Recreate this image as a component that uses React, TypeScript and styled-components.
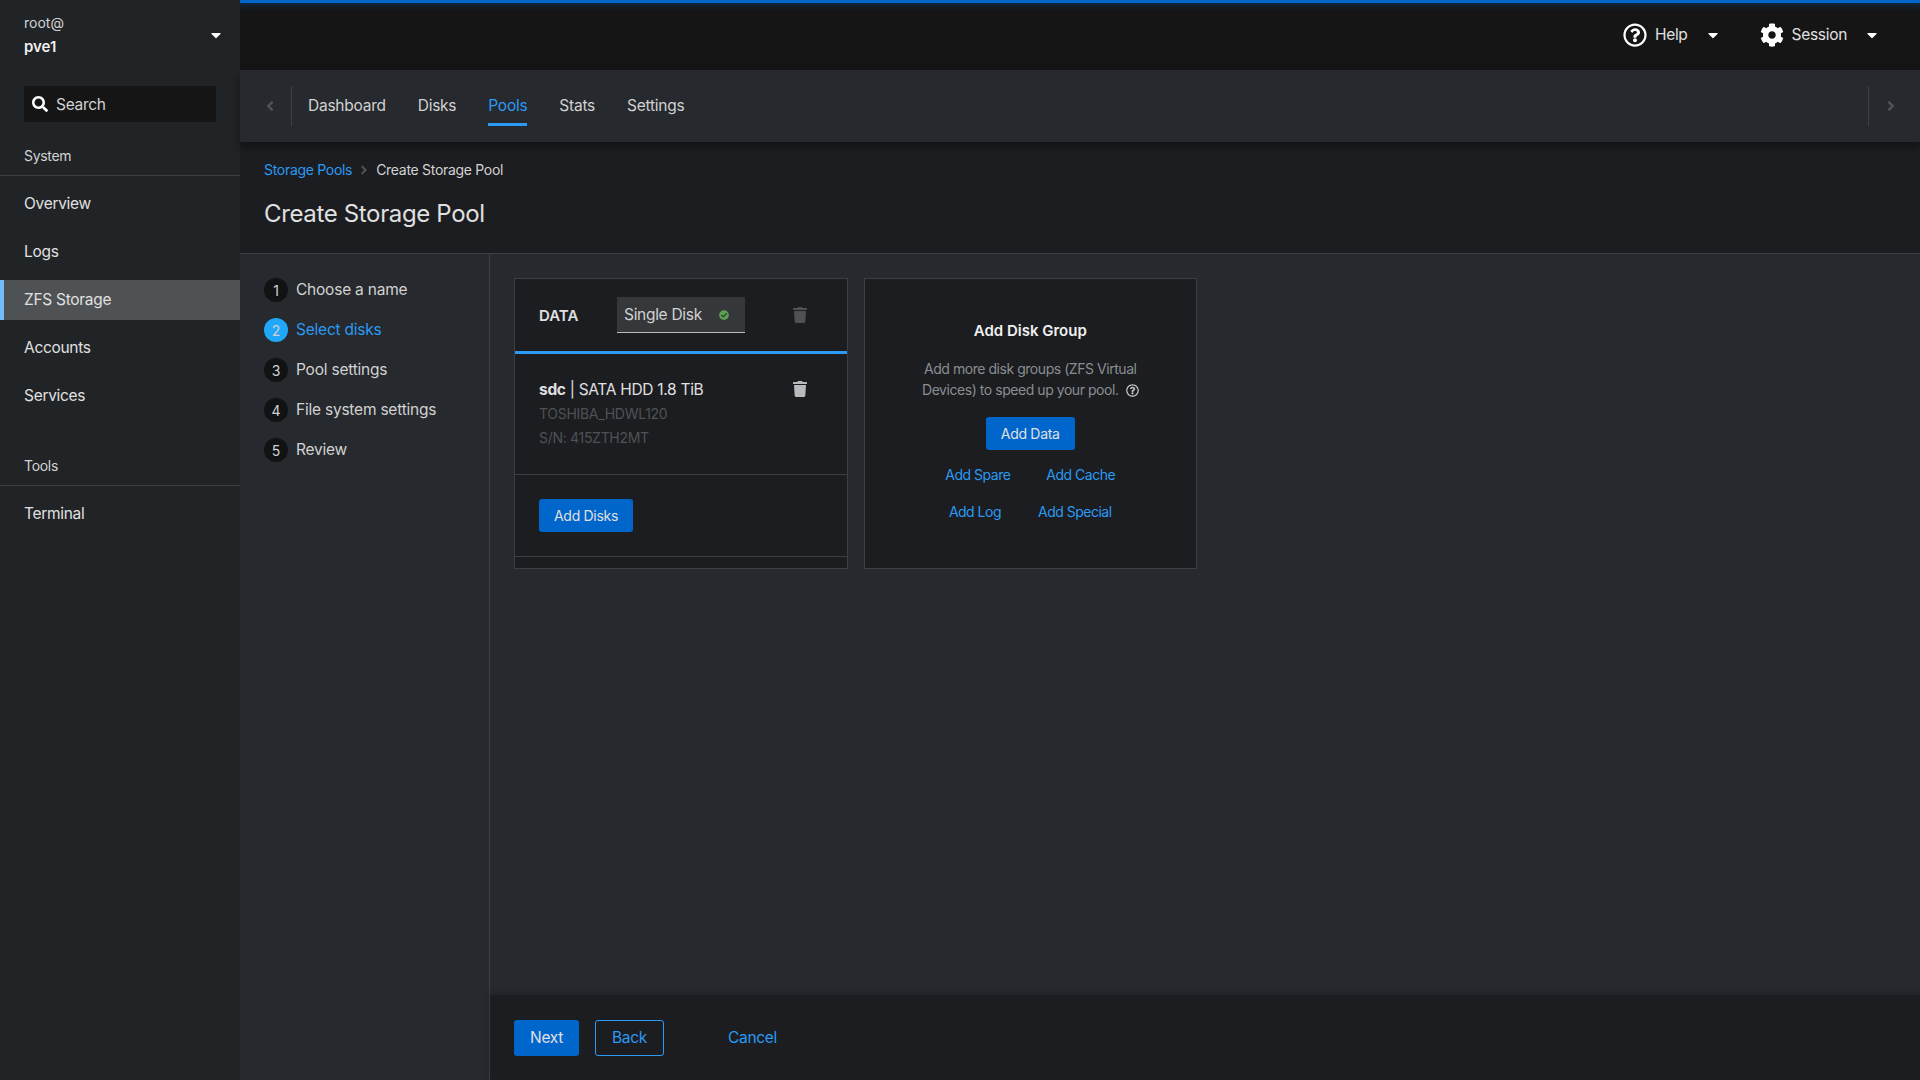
import { FaAngleLeft, FaAngleRight, FaCaretDown, FaCheckCircle, FaCog, FaRegQuestionCircle, FaSearch, FaTrash } from 'react-icons/fa'
import styled, { createGlobalStyle } from 'styled-components'

const navItems = ['Overview', 'Logs', 'ZFS Storage', 'Accounts', 'Services']
const tabs = ['Dashboard', 'Disks', 'Pools', 'Stats', 'Settings']
const steps = ['Choose a name', 'Select disks', 'Pool settings', 'File system settings', 'Review']

const App = () => {
  return (
    <Page>
      <GlobalStyle />
      <Sidebar>
        <HostSwitcher>
          <HostNames>
            <HostUser>root@</HostUser>
            <HostName>pve1</HostName>
          </HostNames>
          <FaCaretDown size={16} color="#fff" />
        </HostSwitcher>
        <SearchBox>
          <FaSearch size={16} color="#fff" />
          Search
        </SearchBox>
        <NavSection>
          <NavTitle>System</NavTitle>
          <NavList>
            {navItems.map((item) => (
              <NavItem key={item} $active={item === 'ZFS Storage'}>
                {item}
              </NavItem>
            ))}
          </NavList>
        </NavSection>
        <NavSection>
          <NavTitle>Tools</NavTitle>
          <NavList>
            <NavItem>Terminal</NavItem>
          </NavList>
        </NavSection>
      </Sidebar>
      <Main>
        <TopBar>
          <TopAction>
            <FaRegQuestionCircle size={24} color="#fff" />
            <TopLabel>Help</TopLabel>
            <TopCaret>
              <FaCaretDown size={16} color="#fff" />
            </TopCaret>
          </TopAction>
          <TopAction>
            <FaCog size={24} color="#fff" />
            <TopLabel>Session</TopLabel>
            <TopCaret>
              <FaCaretDown size={16} color="#fff" />
            </TopCaret>
          </TopAction>
        </TopBar>
        <TabBar>
          <ScrollButton $side="left">
            <FaAngleLeft size={16} />
          </ScrollButton>
          <TabList>
            {tabs.map((tab) => (
              <Tab key={tab} $active={tab === 'Pools'}>
                {tab}
              </Tab>
            ))}
          </TabList>
          <ScrollButton $side="right">
            <FaAngleRight size={16} />
          </ScrollButton>
        </TabBar>
        <PageHeader>
          <Breadcrumb>
            <BreadcrumbLink>Storage Pools</BreadcrumbLink>
            <FaAngleRight size={14} color="#4f5255" />
            <span>Create Storage Pool</span>
          </Breadcrumb>
          <Title>Create Storage Pool</Title>
        </PageHeader>
        <Wizard>
          <WizardNav>
            {steps.map((step, i) => (
              <Step key={step} $active={i === 1}>
                <StepNumber $active={i === 1}>{i + 1}</StepNumber>
                <StepLabel>{step}</StepLabel>
              </Step>
            ))}
          </WizardNav>
          <WizardBody>
            <WizardContent>
              <GroupCard>
                <GroupHeader>
                  <GroupName>DATA</GroupName>
                  <GroupType>
                    Single Disk
                    <FaCheckCircle size={10} color="#5ba352" />
                  </GroupType>
                  <DeleteIcon $disabled>
                    <FaTrash size={16} />
                  </DeleteIcon>
                </GroupHeader>
                <DiskRow>
                  <DiskInfo>
                    <DiskTitle>
                      <b>sdc</b> | SATA HDD 1.8 TiB
                    </DiskTitle>
                    <DiskMeta>TOSHIBA_HDWL120</DiskMeta>
                    <DiskMeta>S/N: 415ZTH2MT</DiskMeta>
                  </DiskInfo>
                  <DeleteIcon>
                    <FaTrash size={16} />
                  </DeleteIcon>
                </DiskRow>
                <AddDisksRow>
                  <SmallButton>Add Disks</SmallButton>
                </AddDisksRow>
              </GroupCard>
              <AddCard>
                <AddTitle>Add Disk Group</AddTitle>
                <AddText>
                  Add more disk groups (ZFS Virtual Devices) to speed up your pool.
                  <FaRegQuestionCircle size={13} color="#c7c7c7" />
                </AddText>
                <SmallButton>Add Data</SmallButton>
                <LinkRow $gap={36}>
                  <CardLink>Add Spare</CardLink>
                  <CardLink>Add Cache</CardLink>
                </LinkRow>
                <LinkRow $gap={37}>
                  <CardLink>Add Log</CardLink>
                  <CardLink>Add Special</CardLink>
                </LinkRow>
              </AddCard>
            </WizardContent>
            <WizardFooter>
              <PrimaryButton>Next</PrimaryButton>
              <SecondaryButton>Back</SecondaryButton>
              <CancelLink>Cancel</CancelLink>
            </WizardFooter>
          </WizardBody>
        </Wizard>
      </Main>
    </Page>
  )
}

export default App

const GlobalStyle = createGlobalStyle`
  html, body {
    margin: 0;
    height: 100%;
    background: #1b1d21;
  }
  body {
    font-family: 'Inter', 'Liberation Sans', sans-serif;
    font-size: 15.5px;
    letter-spacing: -0.3px;
    color: #e0e0e0;
  }
  * {
    box-sizing: border-box;
  }
`

const Page = styled.div`
  display: flex;
  width: 1920px;
  height: 1080px;
  overflow: hidden;
`

const Sidebar = styled.aside`
  width: 240px;
  flex-shrink: 0;
  background: #212427;
`

const HostSwitcher = styled.div`
  display: flex;
  align-items: center;
  justify-content: space-between;
  height: 70px;
  padding: 0 16px 0 24px;
`

const HostNames = styled.div`
  display: flex;
  flex-direction: column;
  gap: 6px;
  line-height: 18px;
  letter-spacing: 0;
`

const HostUser = styled.div`
  font-size: 14px;
  color: #d2d2d2;
`

const HostName = styled.div`
  font-size: 15px;
  font-weight: 600;
  color: #f0f0f0;
`

const SearchBox = styled.div`
  display: flex;
  align-items: center;
  gap: 8px;
  width: 192px;
  height: 36px;
  margin: 16px 24px 0;
  padding-left: 8px;
  background: #151515;
  color: #d2d2d2;
`

const NavSection = styled.section`
  margin-top: 25px;
  & + & {
    margin-top: 41px;
  }
`

const NavTitle = styled.div`
  height: 29px;
  padding-left: 24px;
  border-bottom: 1px solid #3c3f42;
  font-size: 14px;
  line-height: 18px;
  color: #d2d2d2;
`

const NavList = styled.nav`
  display: flex;
  flex-direction: column;
  gap: 8px;
  padding-top: 8px;
`

const NavItem = styled.div<{ $active?: boolean }>`
  height: 40px;
  padding-left: ${(p) => (p.$active ? '20px' : '24px')};
  border-left: ${(p) => (p.$active ? '4px solid #73bcf7' : 'none')};
  background: ${(p) => (p.$active ? '#4f5255' : 'transparent')};
  line-height: 40px;
  color: #e0e0e0;
`

const Main = styled.div`
  flex: 1;
  display: flex;
  flex-direction: column;
  min-width: 0;
  background: #1b1d21;
`

const TopBar = styled.header`
  display: flex;
  align-items: center;
  justify-content: flex-end;
  gap: 39px;
  height: 70px;
  padding: 0 40px 4px 0;
  background: #151515;
  border-top: 3px solid #06c;
  box-shadow: inset 0 6px 6px -4px rgba(0, 102, 204, 0.35);
`

const TopAction = styled.div`
  display: flex;
  align-items: center;
  gap: 8px;
`

const TopLabel = styled.span`
  color: #e0e0e0;
`

const TopCaret = styled.span`
  display: flex;
  margin-left: 9px;
`

const TabBar = styled.div`
  position: relative;
  display: flex;
  align-items: stretch;
  height: 72px;
  padding: 16px 0 16px;
  background: #26292d;
  box-shadow: 0 4px 8px rgba(3, 3, 3, 0.4);
`

const ScrollButton = styled.div<{ $side: 'left' | 'right' }>`
  display: flex;
  align-items: center;
  justify-content: center;
  width: 52px;
  height: 40px;
  color: #4f5255;
  ${(p) =>
    p.$side === 'left'
      ? 'border-right: 1px solid #3c3f42; padding-left: 8px;'
      : 'border-left: 1px solid #3c3f42; padding-right: 8px;'}
`

const TabList = styled.div`
  flex: 1;
  display: flex;
`

const Tab = styled.div<{ $active?: boolean }>`
  padding: 0 16px;
  color: ${(p) => (p.$active ? '#2b9af3' : '#d2d2d2')};
  letter-spacing: -0.25px;
  line-height: 39px;
  position: relative;
  &::after {
    content: '';
    display: ${(p) => (p.$active ? 'block' : 'none')};
    position: absolute;
    left: 16px;
    right: 16px;
    bottom: 0;
    height: 3px;
    background: #2b9af3;
  }
`

const PageHeader = styled.div`
  height: 112px;
  padding: 19px 24px 0;
  background: #1b1d21;
  border-bottom: 1px solid #3c3f42;
`

const Breadcrumb = styled.div`
  display: flex;
  align-items: center;
  gap: 5px;
  font-size: 14px;
  line-height: 18px;
  color: #d2d2d2;
`

const BreadcrumbLink = styled.a`
  color: #2b9af3;
`

const Title = styled.h1`
  margin: 20px 0 0;
  font-size: 24px;
  font-weight: 400;
  letter-spacing: -0.35px;
  line-height: 30px;
  color: #e0e0e0;
`

const Wizard = styled.div`
  flex: 1;
  display: flex;
  min-height: 0;
  background: #26292d;
`

const WizardNav = styled.nav`
  width: 250px;
  flex-shrink: 0;
  display: flex;
  flex-direction: column;
  gap: 16px;
  padding: 24px 24px 0;
  border-right: 1px solid #3c3f42;
`

const Step = styled.div<{ $active?: boolean }>`
  display: flex;
  align-items: center;
  gap: 8px;
  height: 24px;
  letter-spacing: -0.22px;
  color: ${(p) => (p.$active ? '#2b9af3' : '#d2d2d2')};
`

const StepLabel = styled.span`
  padding-bottom: 2px;
`

const StepNumber = styled.span<{ $active?: boolean }>`
  display: flex;
  align-items: center;
  justify-content: center;
  width: 24px;
  height: 24px;
  border-radius: 50%;
  background: ${(p) => (p.$active ? '#1fa7f8' : '#101214')};
  font-size: 14px;
  color: #d2d2d2;
`

const WizardBody = styled.div`
  flex: 1;
  display: flex;
  flex-direction: column;
  min-width: 0;
`

const WizardContent = styled.div`
  flex: 1;
  display: flex;
  align-items: flex-start;
  gap: 16px;
  padding: 24px;
`

const Card = styled.div`
  width: 333.5px;
  height: 291px;
  background: #1b1d21;
  border: 1px solid #3c3f42;
`

const GroupCard = styled(Card)`
  display: flex;
  flex-direction: column;
`

const GroupHeader = styled.div`
  display: flex;
  align-items: center;
  height: 75px;
  padding: 0 39px 0 24px;
  border-bottom: 3px solid #2b9af3;
  flex-shrink: 0;
`

const GroupName = styled.div`
  width: 78px;
  font-size: 15px;
  font-weight: 600;
  letter-spacing: 0;
  color: #e0e0e0;
`

const GroupType = styled.div`
  display: flex;
  align-items: center;
  justify-content: space-between;
  width: 128px;
  height: 36px;
  padding: 0 16px 0 7px;
  background: #36373a;
  border-bottom: 1px solid #b8bbbe;
  color: #d2d2d2;
`

const DeleteIcon = styled.span<{ $disabled?: boolean }>`
  display: flex;
  margin-left: auto;
  color: ${(p) => (p.$disabled ? '#4f5255' : '#b8bbbe')};
`

const DiskRow = styled.div`
  display: flex;
  align-items: flex-start;
  height: 121px;
  padding: 27px 39px 0 24px;
  border-bottom: 1px solid #3c3f42;
  flex-shrink: 0;
`

const DiskInfo = styled.div`
  display: flex;
  flex-direction: column;
  gap: 6px;
`

const DiskTitle = styled.div`
  line-height: 18px;
  color: #e0e0e0;
`

const DiskMeta = styled.div`
  font-size: 14px;
  line-height: 18px;
  color: #4f5255;
`

const AddDisksRow = styled.div`
  height: 82px;
  padding: 24px;
  border-bottom: 1px solid #3c3f42;
  flex-shrink: 0;
`

const SmallButton = styled.button`
  height: 33px;
  padding: 0 15px;
  border: none;
  border-radius: 3px;
  background: #06c;
  font: inherit;
  font-size: 14px;
  letter-spacing: inherit;
  color: #e0e0e0;
`

const AddCard = styled(Card)`
  display: flex;
  flex-direction: column;
  align-items: center;
  padding-top: 42px;
`

const AddTitle = styled.div`
  font-size: 15px;
  font-weight: 600;
  letter-spacing: 0;
  line-height: 20px;
  color: #f0f0f0;
`

const AddText = styled.p`
  width: 240px;
  margin: 17px 0 17px;
  font-size: 14px;
  letter-spacing: -0.45px;
  line-height: 21px;
  text-align: center;
  color: #8a8d90;
  svg {
    margin-left: 7px;
    vertical-align: -2px;
  }
`

const LinkRow = styled.div<{ $gap: number }>`
  display: flex;
  gap: ${(p) => p.$gap}px;
  margin-top: 14px;
  line-height: 21px;
  & + & {
    margin-top: 16px;
  }
`

const CardLink = styled.a`
  font-size: 14px;
  letter-spacing: -0.5px;
  color: #2b9af3;
`

const WizardFooter = styled.footer`
  display: flex;
  align-items: center;
  height: 85px;
  padding-left: 24px;
  background: #1b1d21;
  box-shadow: 0 -2px 6px rgba(3, 3, 3, 0.16);
`

const PrimaryButton = styled.button`
  height: 36px;
  padding: 0 16px;
  border: none;
  border-radius: 3px;
  background: #06c;
  font: inherit;
  letter-spacing: inherit;
  color: #e0e0e0;
`

const SecondaryButton = styled.button`
  height: 36px;
  margin-left: 16px;
  padding: 0 16px;
  border: 1px solid #2b9af3;
  border-radius: 3px;
  background: transparent;
  font: inherit;
  letter-spacing: inherit;
  color: #2b9af3;
`

const CancelLink = styled.a`
  margin-left: 64px;
  color: #2b9af3;
`
